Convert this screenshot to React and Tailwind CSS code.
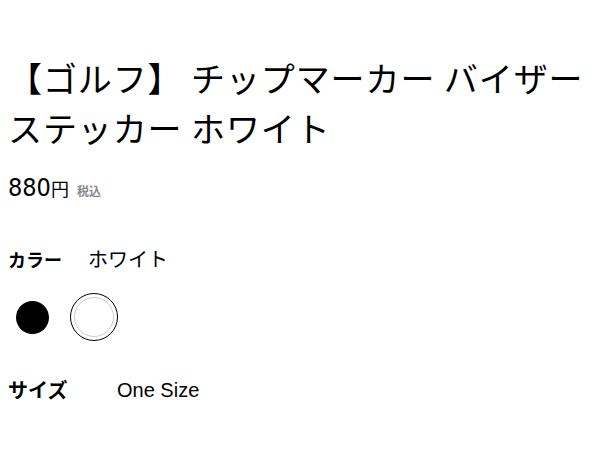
import React from "react";

const jp = { fontFamily: '"Noto Sans CJK JP", "Noto Sans", sans-serif' };

export default function App() {
  return (
    <div className="w-[600px] h-[450px] bg-white text-black px-2 pt-[53px]" style={jp}>
      <h1 className="text-[34px] leading-[50px] font-normal tracking-[0.9px]">
        【ゴルフ】 チップマーカー バイザーステッカー ホワイト
      </h1>

      <div className="mt-[20px] flex items-baseline h-[30px]">
        <span
          className="text-[25px] leading-[30px]"
          style={{ fontFamily: '"DejaVu Sans Condensed", "Noto Sans CJK JP", sans-serif' }}
        >
          880
        </span>
        <span className="text-[18px] leading-[30px]">円</span>
        <span className="ml-[8px] text-[12px] text-[#888] font-bold">税込</span>
      </div>

      <div className="mt-[44px] flex items-center h-[24px]">
        <span className="text-[18px] font-bold w-[80px]">カラー</span>
        <span className="text-[20px]">ホワイト</span>
      </div>

      <div className="mt-[22px] flex items-center gap-[21px] pl-[8px]">
        <div className="w-[33px] h-[33px] rounded-full bg-black" />
        <div className="w-[48px] h-[48px] rounded-full border border-black flex items-center justify-center">
          <div className="w-[40px] h-[40px] rounded-full border border-[#ccc] bg-white" />
        </div>
      </div>

      <div className="mt-[37px] flex items-center h-[24px]">
        <span className="text-[20px] font-bold w-[109px]">サイズ</span>
        <span className="text-[20px]" style={{ fontFamily: '"Liberation Sans", Arial, sans-serif' }}>
          One Size
        </span>
      </div>
    </div>
  );
}
